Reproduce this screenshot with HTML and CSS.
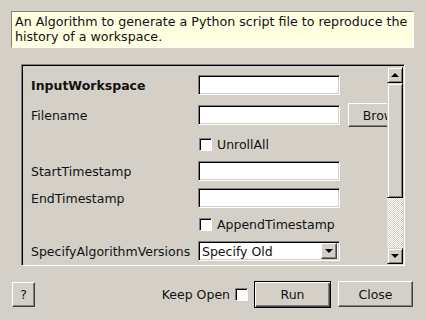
FILE: index.html
```html
<!DOCTYPE html>
<html>
<head>
<meta charset="utf-8">
<link rel="stylesheet" href="styles.css">
</head>
<body>
<div class="dialog">
  <div class="desc">An Algorithm to generate a Python script file to reproduce the<br>history of a workspace.</div>
  <div class="frame">
    <div class="content">
      <div class="row r1"><span class="label bold">InputWorkspace</span><span class="field"></span></div>
      <div class="row r2"><span class="label">Filename</span><span class="field"></span><span class="btn browse">Browse</span></div>
      <div class="row r3"><span class="label"></span><span class="check"></span><span class="ctext">UnrollAll</span></div>
      <div class="row r4"><span class="label">StartTimestamp</span><span class="field"></span></div>
      <div class="row r5"><span class="label">EndTimestamp</span><span class="field"></span></div>
      <div class="row r6"><span class="label"></span><span class="check"></span><span class="ctext">AppendTimestamp</span></div>
      <div class="row r7"><span class="label">SpecifyAlgorithmVersions</span><span class="combo"><span class="ctxt">Specify Old</span><span class="cbtn"><span class="tri-down"></span></span></span></div>
    </div>
    <div class="scrollbar">
      <div class="sbtn"><span class="tri-up"></span></div>
      <div class="thumb"></div>
      <div class="track"></div>
      <div class="sbtn"><span class="tri-down"></span></div>
    </div>
  </div>
  <div class="footer">
    <span class="btn help">?</span>
    <span class="spacer"></span>
    <span class="keep">Keep Open</span>
    <span class="check keepcheck"></span>
    <span class="btn run">Run</span>
    <span class="btn close">Close</span>
  </div>
</div>
</body>
</html>
```

FILE: styles.css
```css
html, body {
  margin: 0;
  padding: 0;
  background: #d4d0c8;
}
body {
  font-family: "DejaVu Sans", sans-serif;
  font-size: 12.5px;
  color: #111;
}
.dialog {
  width: 426px;
  height: 320px;
  box-sizing: border-box;
  padding: 11px 13px 0 11px;
  display: flex;
  flex-direction: column;
}
.desc {
  width: 403px;
  height: 37px;
  box-sizing: border-box;
  background: #ffffe1;
  border: 1px solid;
  border-color: #808080 #fff #fff #808080;
  padding: 2px 0 0 3px;
  line-height: 15px;
  font-size: 12.65px;
  white-space: nowrap;
  overflow: hidden;
}
.frame {
  margin: 16px 0 0 10px;
  width: 384px;
  height: 202px;
  box-sizing: border-box;
  border: 1px solid;
  border-color: #808080 #fff #fff #808080;
  box-shadow: inset 1px 1px 0 #000, inset -1px -1px 0 #d4d0c8;
  padding: 2px 1px 1px 2px;
  display: flex;
}
.content {
  flex: 1;
  overflow: hidden;
  padding: 3px 0 0 7px;
  display: flex;
  flex-direction: column;
}
.row {
  display: flex;
  align-items: center;
  flex-shrink: 0;
  white-space: nowrap;
}
.r1 { height: 30px; }
.r2 { height: 30px; }
.r3 { height: 28px; }
.r4 { height: 26px; }
.r5 { height: 28px; }
.r6 { height: 24px; }
.r7 { height: 30px; }
.label {
  width: 167px;
  flex-shrink: 0;
}
.bold { font-weight: bold; }
.field {
  width: 142px;
  height: 20px;
  flex-shrink: 0;
  box-sizing: border-box;
  background: #fff;
  border: 1px solid;
  border-color: #808080 #fff #fff #808080;
  box-shadow: inset 1px 1px 0 #000, inset -1px -1px 0 #d4d0c8;
}
.btn {
  display: flex;
  align-items: center;
  justify-content: center;
  box-sizing: border-box;
  background: #d4d0c8;
  border: 1px solid;
  border-color: #fff #404040 #404040 #fff;
  box-shadow: inset -1px -1px 0 #808080;
  flex-shrink: 0;
}
.browse {
  width: 75px;
  height: 24px;
  margin-left: 8px;
}
.check {
  width: 13px;
  height: 13px;
  box-sizing: border-box;
  background: #fff;
  border: 1px solid;
  border-color: #808080 #fff #fff #808080;
  box-shadow: inset 1px 1px 0 #000;
  flex-shrink: 0;
  margin-left: 1px;
}
.ctext { margin-left: 5px; }
.combo {
  width: 142px;
  height: 20px;
  box-sizing: border-box;
  background: #fff;
  border: 1px solid;
  border-color: #808080 #fff #fff #808080;
  box-shadow: inset 1px 1px 0 #000, inset -1px -1px 0 #d4d0c8;
  display: flex;
  align-items: center;
  padding: 1px 2px 1px 2px;
}
.ctxt {
  flex: 1;
  padding-left: 1px;
}
.cbtn {
  width: 16px;
  height: 16px;
  box-sizing: border-box;
  background: #d4d0c8;
  border: 1px solid;
  border-color: #fff #404040 #404040 #fff;
  box-shadow: inset -1px -1px 0 #808080;
  display: flex;
  align-items: center;
  justify-content: center;
}
.tri-down {
  width: 0;
  height: 0;
  border-left: 4px solid transparent;
  border-right: 4px solid transparent;
  border-top: 4px solid #000;
}
.tri-up {
  width: 0;
  height: 0;
  border-left: 4px solid transparent;
  border-right: 4px solid transparent;
  border-bottom: 4px solid #000;
}
.scrollbar {
  width: 16px;
  display: flex;
  flex-direction: column;
}
.sbtn {
  height: 16px;
  flex-shrink: 0;
  box-sizing: border-box;
  background: #d4d0c8;
  border: 1px solid;
  border-color: #d4d0c8 #000 #000 #d4d0c8;
  box-shadow: inset 1px 1px 0 #fff, inset -1px -1px 0 #808080;
  display: flex;
  align-items: center;
  justify-content: center;
}
.thumb {
  height: 115px;
  flex-shrink: 0;
  box-sizing: border-box;
  background: #d4d0c8;
  border: 1px solid;
  border-color: #d4d0c8 #000 #000 #d4d0c8;
  box-shadow: inset 1px 1px 0 #fff, inset -1px -1px 0 #808080;
}
.track {
  flex: 1;
  background: repeating-conic-gradient(#fff 0 25%, #d4d0c8 0 50%);
  background-size: 2px 2px;
}
.footer {
  margin-top: 15px;
  height: 26px;
  display: flex;
  align-items: center;
}
.help {
  width: 23px;
  height: 25px;
  margin-left: 1px;
}
.spacer { flex: 1; }
.keep { margin-right: 4px; }
.keepcheck { margin-right: 6px; }
.run {
  width: 77px;
  height: 27px;
  border: 1px solid #000;
  box-shadow: inset 1px 1px 0 #fff, inset -1px -1px 0 #404040, inset -2px -2px 0 #808080;
  margin-right: 7px;
}
.close {
  width: 75px;
  height: 26px;
}
```
